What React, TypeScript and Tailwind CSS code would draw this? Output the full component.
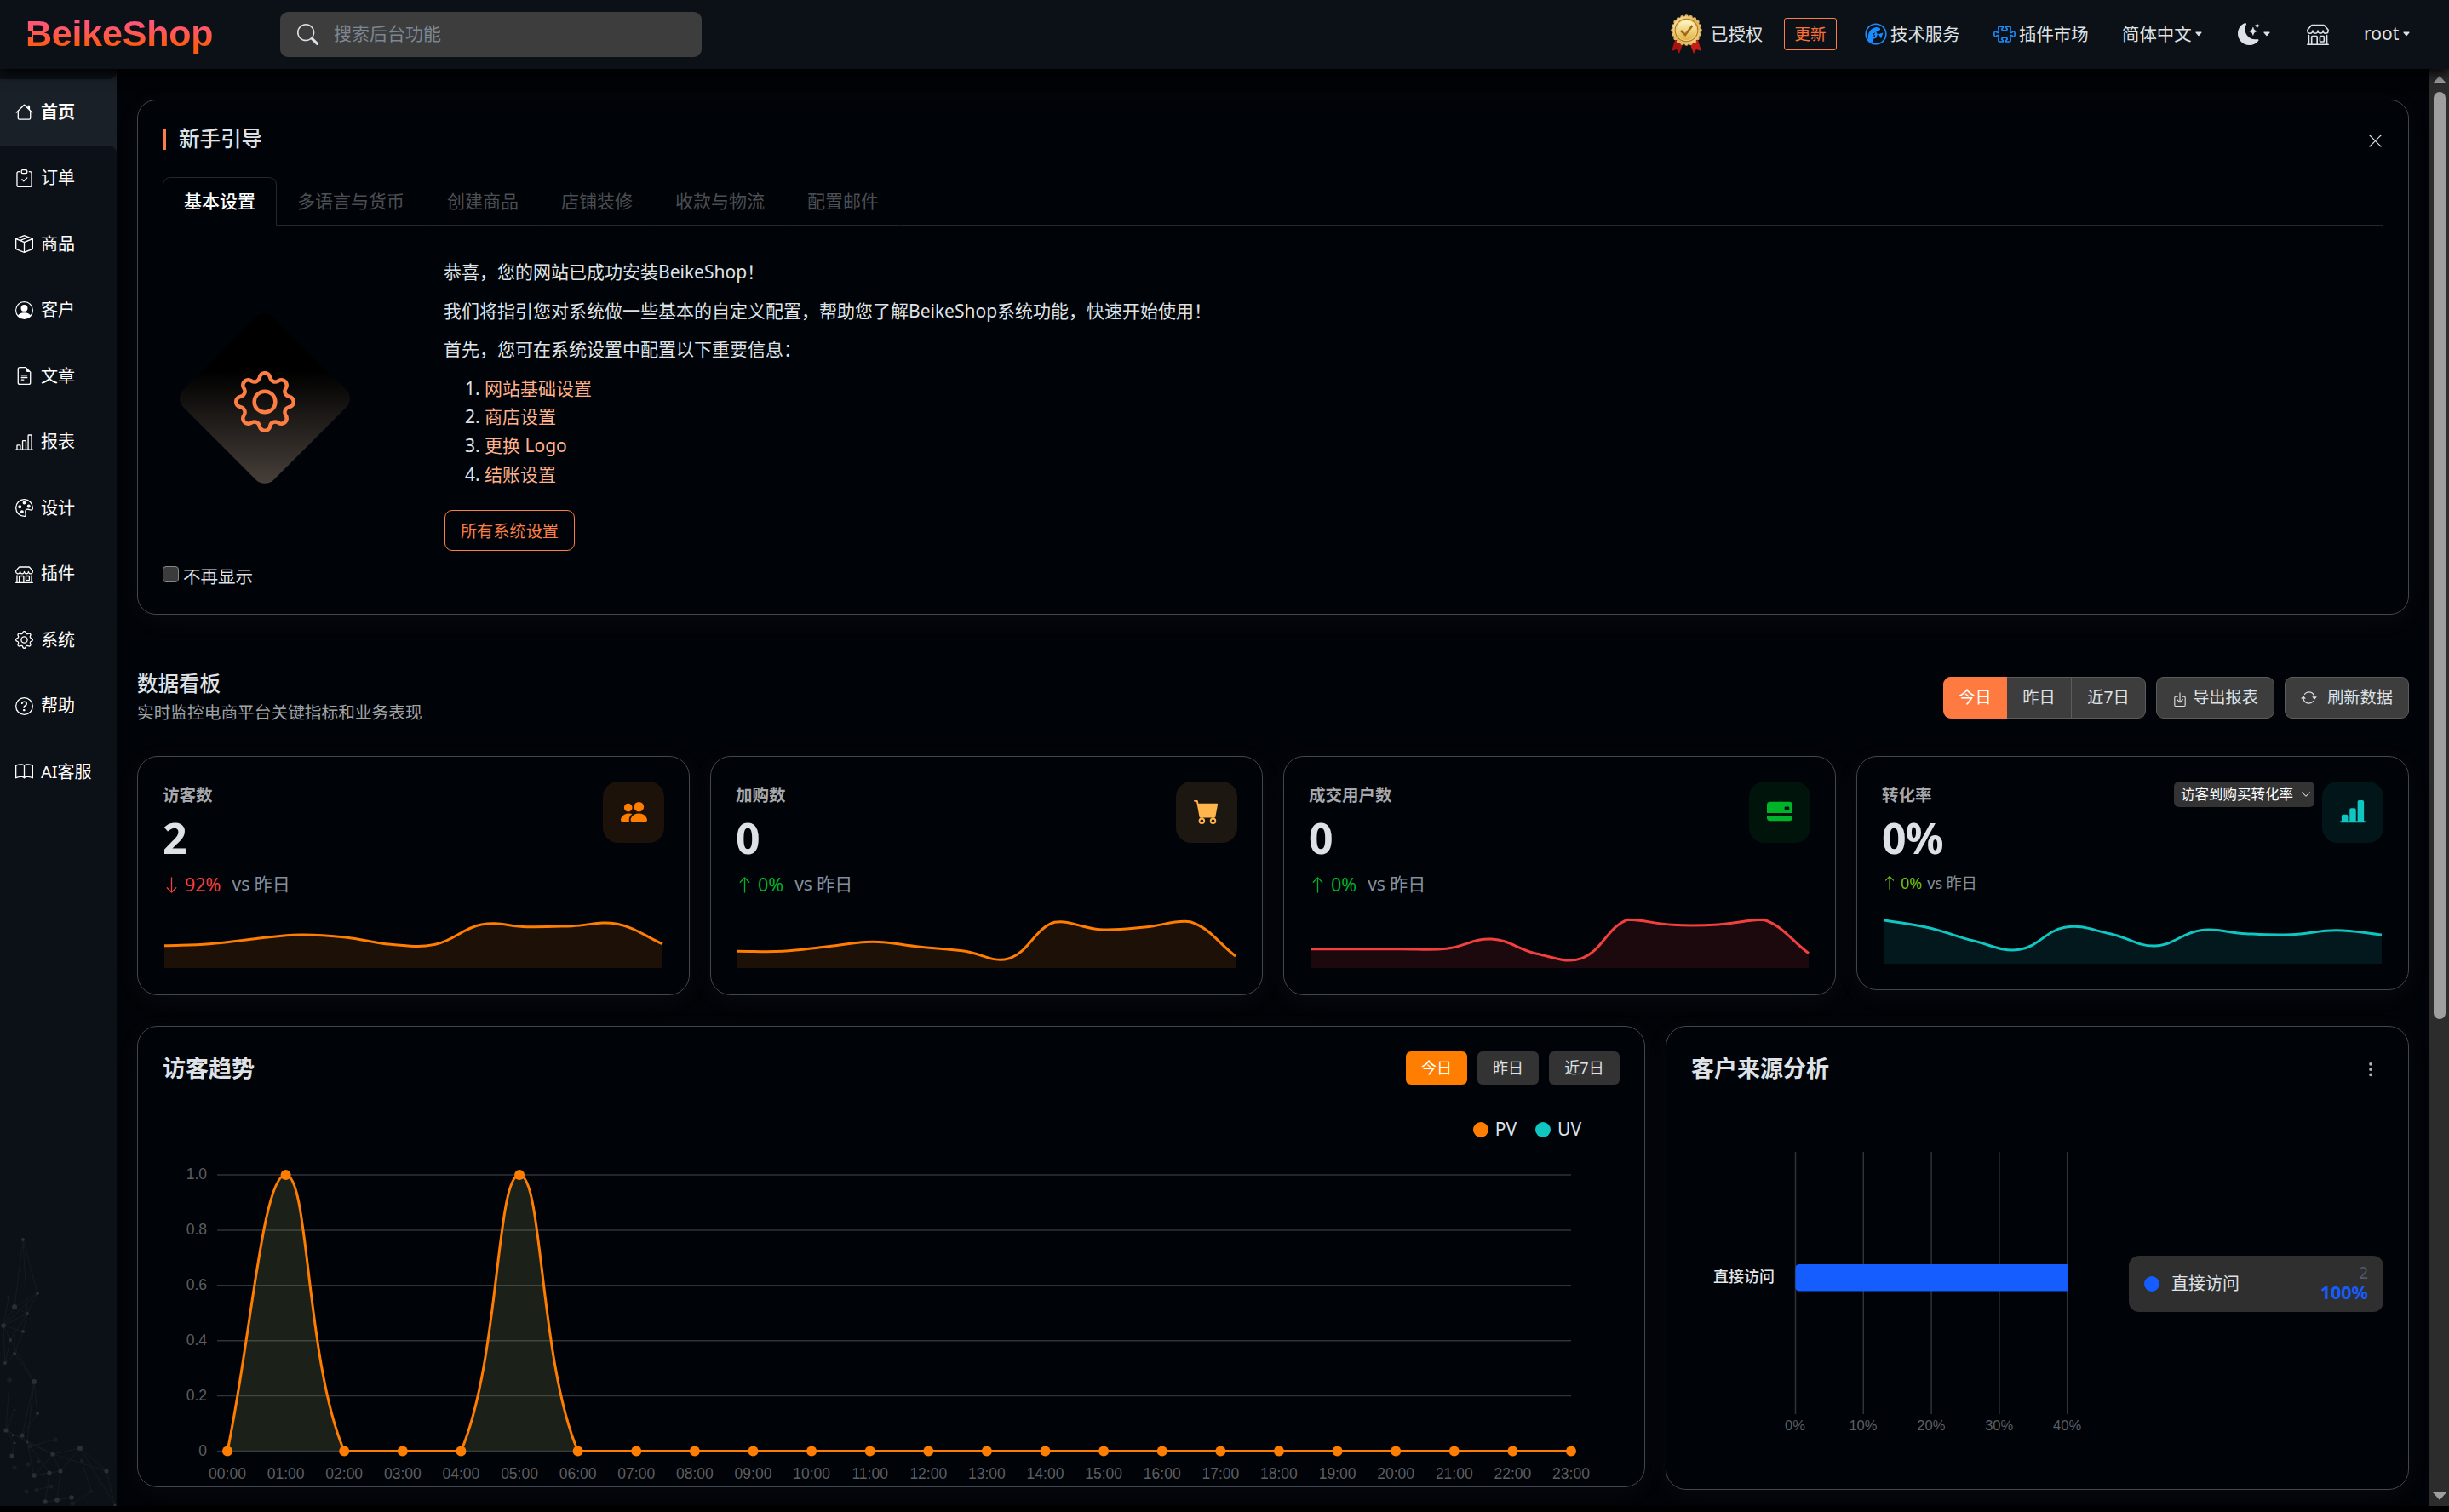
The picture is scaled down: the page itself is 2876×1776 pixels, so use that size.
import { type ReactNode } from 'react';
import clsx from 'clsx';
import {
    BsArrowDown,
    BsArrowRepeat,
    BsArrowUp,
    BsBarChartLine,
    BsBarChartLineFill,
    BsBook,
    BsBoxArrowInDown,
    BsBoxSeam,
    BsCaretDownFill,
    BsCartFill,
    BsChevronDown,
    BsClipboardCheck,
    BsCreditCard2BackFill,
    BsFileEarmarkText,
    BsGear,
    BsHouse,
    BsMoonStarsFill,
    BsPalette,
    BsPeopleFill,
    BsPersonCircle,
    BsPuzzle,
    BsQuestionCircle,
    BsSearch,
    BsShop,
    BsThreeDotsVertical,
    BsXLg,
} from 'react-icons/bs';

type Point = [number, number];

/** Bezier spline through the points, control points capped to the chart area. */
function smoothPath(pts: Point[], top: number, bottom: number, tension = 0.4) {
    const cap = (y: number) => Math.max(top, Math.min(bottom, y));
    let d = `M${pts[0][0]} ${pts[0][1]}`;

    const controls = pts.map((cur, i) => {
        const prev = pts[i - 1] ?? cur;
        const next = pts[i + 1] ?? cur;
        const d01 = Math.hypot(cur[0] - prev[0], cur[1] - prev[1]);
        const d12 = Math.hypot(next[0] - cur[0], next[1] - cur[1]);
        const fa = (tension * d01) / (d01 + d12);
        const fb = (tension * d12) / (d01 + d12);
        const vx = next[0] - prev[0];
        const vy = next[1] - prev[1];
        return {
            before: [cur[0] - fa * vx, cap(cur[1] - fa * vy)],
            after: [cur[0] + fb * vx, cap(cur[1] + fb * vy)],
        };
    });

    for (let i = 1; i < pts.length; i++) {
        d += ` C${controls[i - 1].after.join(' ')} ${controls[i].before.join(' ')} ${pts[i].join(' ')}`;
    }
    return d;
}

const menu = [
    { label: '首页', icon: BsHouse },
    { label: '订单', icon: BsClipboardCheck },
    { label: '商品', icon: BsBoxSeam },
    { label: '客户', icon: BsPersonCircle },
    { label: '文章', icon: BsFileEarmarkText },
    { label: '报表', icon: BsBarChartLine },
    { label: '设计', icon: BsPalette },
    { label: '插件', icon: BsShop },
    { label: '系统', icon: BsGear },
    { label: '帮助', icon: BsQuestionCircle },
    { label: 'AI客服', icon: BsBook },
];

const guideTabs = ['基本设置', '多语言与货币', '创建商品', '店铺装修', '收款与物流', '配置邮件'];
const guideLinks = ['网站基础设置', '商店设置', '更换 Logo', '结账设置'];

function Medal() {
    const scallops = Array.from({ length: 20 }, (_, i) => (i * Math.PI) / 10);
    return (
        <svg viewBox="0 0 37 46" className="ml-px h-[46px] w-[37px]">
            <defs>
                <linearGradient id="gold" x1="0" y1="0" x2="1" y2="1">
                    <stop offset="0" stopColor="#fff0b0" />
                    <stop offset="0.5" stopColor="#e3b04b" />
                    <stop offset="1" stopColor="#f7dd8c" />
                </linearGradient>
                <linearGradient id="face" x1="0" y1="0" x2="0" y2="1">
                    <stop offset="0" stopColor="#fff6c4" />
                    <stop offset="1" stopColor="#e3b247" />
                </linearGradient>
            </defs>
            <path d="M5 30 L1 43 L7 41 L10 46 L15 33 Z" fill="#a51410" />
            <path d="M32 30 L36 43 L30 41 L27 46 L22 33 Z" fill="#c21d17" />
            {scallops.map(a => (
                <circle key={a} cx={18.5 + 16 * Math.cos(a)} cy={18.5 + 16 * Math.sin(a)} r="2.3" fill="#e0b865" />
            ))}
            <circle cx="18.5" cy="18.5" r="16.2" fill="url(#gold)" />
            <circle cx="18.5" cy="18.5" r="13.8" fill="#a8702a" />
            <circle cx="18.5" cy="18.5" r="12.8" fill="#f0cf7a" />
            <circle cx="18.5" cy="18.5" r="11.5" fill="url(#face)" />
            <path d="M12 19 L17 24 L25.500 13" fill="none" stroke="#a06a12" strokeWidth="2.6" />
        </svg>
    );
}

function ServiceIcon() {
    return (
        <svg viewBox="0 0 26 26" className="h-[26px] w-[26px]">
            <circle cx="13" cy="13" r="11.800" fill="none" stroke="#1a8cff" strokeWidth="1.600" />
            <path
                d="M4 20 C2.500 12 7 5.500 13.500 5 C17 5 18.500 6 18 8 L15.500 10 L13 10.500 L15 13 L13.500 17.500 L9.500 19 L9.500 23 C7 23 5 22 4 20 Z"
                fill="#1a8cff"
            />
            <path d="M16 13 L21.500 11.500 L19 18.500 Z" fill="#1a8cff" />
            <path d="M12 12 L9.500 13 L12 15.200 L9.500 16.500" fill="none" stroke="#0c1118" strokeWidth="1" />
        </svg>
    );
}

function Header() {
    return (
        <header className="relative z-10 flex h-[81px] items-center bg-[#0c1118] pb-px text-[20.4px] text-[#dee2e6] shadow-[0_5px_14px_#000]">
            <div className="relative -mt-[3px] ml-[30px] w-[299px]">
                <span className="bg-gradient-to-b from-[#ff5577] from-25% to-[#ff5a14] to-75% bg-clip-text font-['Liberation_Sans'] text-[43px] leading-[50px] font-bold tracking-[-0.2px] text-transparent">
                    BeikeShop
                </span>
                <span className="absolute top-[23px] left-[2px] h-[6px] w-[6px] bg-[#0c1118]" />
            </div>
            <div className="flex h-[53px] w-[495px] items-center rounded-[9px] bg-[#3d3d3d] pl-5">
                <BsSearch className="h-[25px] w-[25px]" />
                <span className="ml-[18px] text-[21px] text-[#7c8794]">搜索后台功能</span>
            </div>

            <div className="mr-[45px] ml-auto flex items-center whitespace-nowrap">
                <div className="flex w-[134px] items-center gap-[10px]">
                    <Medal />
                    <span>已授权</span>
                </div>
                <button className="h-[38px] w-[62px] rounded-[3px] border-[1.500px] border-[#fd7e44] text-[18.500px] text-[#fd7034]">
                    更新
                </button>
                <div className="ml-[33px] flex w-[151px] items-center gap-[4px]">
                    <ServiceIcon />
                    <span>技术服务</span>
                </div>
                <div className="flex w-[151px] items-center gap-[4px]">
                    <BsPuzzle className="h-[26px] w-[26px] text-[#1a8cff]" />
                    <span>插件市场</span>
                </div>
                <div className="flex w-[136px] items-center gap-[3px]">
                    <span>简体中文</span>
                    <BsCaretDownFill className="h-[10px] w-[10px]" />
                </div>
                <div className="flex w-[81px] items-center gap-[3px]">
                    <BsMoonStarsFill className="h-[26px] w-[26px]" />
                    <BsCaretDownFill className="h-[10px] w-[10px]" />
                </div>
                <div className="w-[67px]">
                    <BsShop className="h-[26px] w-[26px]" />
                </div>
                <div className="flex w-[55px] items-center gap-[4px]">
                    <span className="text-[21px]">root</span>
                    <BsCaretDownFill className="h-[10px] w-[10px] shrink-0" />
                </div>
            </div>
        </header>
    );
}

const nodes: [number, number, number, boolean][] = [
    [27, 12, 2, true], [44, 75, 2, true], [17, 91, 3, true], [32, 99, 2, true], [4, 113, 2.8, true],
    [27, 120, 2, true], [12, 130, 2, true], [17, 146, 2, true], [6, 157, 2, true], [40, 179, 3, true],
    [44, 216, 2, true], [7, 236, 2.6, true], [26, 242, 2.6, true], [32, 250, 1.6, true], [17, 251, 1.6, true],
    [15, 242, 1.4, true], [14, 266, 2.6, true], [62, 264, 2.6, true], [94, 257, 3, true], [125, 284, 2.6, true],
    [71, 284, 2.6, true], [58, 286, 2.6, true], [40, 289, 2.8, true], [84, 315, 2.8, true], [67, 318, 2.8, true],
    [53, 320, 2.8, true], [135, 324, 1.5, true], [10, 80, 2, false], [11, 177, 2.8, false], [17, 212, 1.6, false],
    [65, 247, 2.6, false], [96, 272, 2.4, false], [35, 255, 2.6, false], [45, 273, 2.4, false], [33, 276, 2.8, false],
    [17, 280, 2.6, false], [60, 302, 2.6, false], [43, 306, 2.6, false], [31, 308, 2.6, false], [107, 308, 1.8, false],
    [85, 322, 2.6, false],
];

const links: [number, number][] = [
    [0, 1], [0, 2], [0, 3], [1, 2], [1, 4], [1, 3], [2, 3], [2, 4], [3, 4], [3, 5], [4, 5], [3, 6], [5, 7], [4, 6],
    [6, 8], [4, 8], [7, 8], [2, 7], [6, 9], [7, 9], [9, 10], [9, 12], [9, 13], [10, 12], [11, 14], [12, 13], [14, 16],
    [13, 17], [17, 18], [18, 20], [18, 19], [17, 19], [13, 22], [20, 22], [21, 22], [17, 22], [13, 21], [19, 26],
    [18, 26], [20, 24], [21, 25], [23, 24], [24, 25], [20, 17], [11, 13], [11, 17], [28, 11], [29, 11], [30, 32],
    [31, 39], [36, 37], [27, 4], [39, 40],
];

function MenuItem({ item, active }: { item: (typeof menu)[number]; active?: boolean }) {
    const Icon = item.icon;
    return (
        <a className={clsx('flex h-[77.5px] items-center gap-[9px] pl-[18px] leading-none', active && 'font-bold')}>
            <Icon className="h-[21px] w-[21px]" />
            {item.label}
        </a>
    );
}

function Sidebar() {
    const [home, ...rest] = menu;
    return (
        <aside className="flex w-[137px] shrink-0 flex-col bg-[#1a2027] text-[20px] text-white">
            <div className="h-[12px] shrink-0 rounded-br-[9px] bg-[#0c1118]" />
            <MenuItem item={home} active />
            <div className="flex flex-1 flex-col rounded-tr-[9px] bg-[#0c1118]">
                {rest.map(item => (
                    <MenuItem key={item.label} item={item} />
                ))}
                <svg viewBox="0 0 137 356" className="mt-auto h-[356px] w-[137px]">
                    {links.map(([a, b]) => (
                        <line
                            key={`${a}-${b}`}
                            x1={nodes[a][0]}
                            y1={nodes[a][1] + 31}
                            x2={nodes[b][0]}
                            y2={nodes[b][1] + 31}
                            stroke="#161b1f"
                        />
                    ))}
                    {nodes.map(([x, y, r, bright]) => (
                        <circle key={`${x}-${y}`} cx={x} cy={y + 31} r={r} fill={bright ? '#2b2f34' : '#191d22'} />
                    ))}
                </svg>
            </div>
        </aside>
    );
}

function Card({ className, children }: { className?: string; children: ReactNode }) {
    return (
        <section className={clsx('border border-[#42464d] bg-[#000308] shadow-[0_6px_30px_rgba(150,180,220,0.05)]', className)}>
            {children}
        </section>
    );
}

function Guide() {
    return (
        <Card className="h-[605px] rounded-[22px] px-[29px]">
            <div className="flex h-[90px] items-center">
                <span className="h-[25px] w-1 bg-[#fd7e44]" />
                <h2 className="ml-[15px] text-[24.500px] font-medium">新手引导</h2>
                <BsXLg className="mt-[4px] ml-auto h-[19px] w-[19px]" />
            </div>

            <div className="flex h-[57px] text-[21px] text-[#4b4e52]">
                {guideTabs.map((tab, i) => (
                    <span
                        key={tab}
                        className={clsx(
                            'flex items-center border px-6',
                            i === 0
                                ? 'rounded-t-[9px] border-[#24282d] border-b-transparent font-medium text-white'
                                : '-ml-px border-transparent border-b-[#24282d] pr-[25px]',
                        )}
                    >
                        {tab}
                    </span>
                ))}
                <span className="flex-1 border-b border-[#24282d]" />
            </div>

            <div className="mt-[39px] flex h-[343px]">
                <div className="flex w-[271px] justify-center border-r border-[#303338] pr-[30px]">
                    <div className="relative mt-[89px] h-[150px] w-[150px]">
                        <div className="h-full w-full rotate-45 rounded-[15px] bg-[linear-gradient(135deg,#000_35%,#4a423c)]" />
                        <BsGear className="absolute top-[43px] left-[39px] h-[72px] w-[72px] text-[#fd7e44]" />
                    </div>
                </div>
                <div className="-mt-px pl-[59px] text-[21px] leading-[33.600px]">
                    <p className="mb-3">恭喜，您的网站已成功安装BeikeShop！</p>
                    <p className="mb-3">我们将指引您对系统做一些基本的自定义配置，帮助您了解BeikeShop系统功能，快速开始使用！</p>
                    <p className="mb-3">首先，您可在系统设置中配置以下重要信息：</p>
                    <ol className="list-decimal pl-12">
                        {guideLinks.map(link => (
                            <li key={link}>
                                <a className="text-[#feb08b]">{link}</a>
                            </li>
                        ))}
                    </ol>
                    <button className="mt-[25px] ml-px h-[48px] w-[153px] rounded-[9px] border border-[#fd7e44] text-[19.200px] leading-none text-[#fd7e44]">
                        所有系统设置
                    </button>
                </div>
            </div>

            <label className="mt-[13px] flex h-[34px] items-center">
                <span className="mb-[6px] h-[19px] w-[19px] rounded-[4px] border-[1.500px] border-[#858585] bg-[#3b3b3b]" />
                <span className="ml-[5px] text-[20.500px] leading-[34px]">不再显示</span>
            </label>
        </Card>
    );
}

function DashboardHeading() {
    const button = 'flex h-[49px] items-center justify-center border border-[#5c5c5c] bg-[#3d3d3d] text-[19.200px]';
    return (
        <div className="mt-[64px] flex h-[67px] items-center justify-between">
            <div>
                <h2 className="text-[24.500px] leading-[35px] font-medium">数据看板</h2>
                <p className="text-[19.700px] leading-[34px] text-[#a0a3a6]">实时监控电商平台关键指标和业务表现</p>
            </div>
            <div className="flex gap-3">
                <div className="flex">
                    <button className="h-[49px] w-[75px] rounded-l-[9px] bg-[#ff7a40] text-[19.200px] text-white">今日</button>
                    <button className={clsx(button, 'w-[76px] border-l-0')}>昨日</button>
                    <button className={clsx(button, 'w-[87px] rounded-r-[9px] border-l-0')}>近7日</button>
                </div>
                <button className={clsx(button, 'w-[139px] gap-[6px] rounded-[9px]')}>
                    <BsBoxArrowInDown className="mt-[3px] h-[18px] w-[18px]" />
                    导出报表
                </button>
                <button className={clsx(button, 'w-[146px] gap-[12px] rounded-[9px]')}>
                    <BsArrowRepeat className="h-[19px] w-[19px]" />
                    刷新数据
                </button>
            </div>
        </div>
    );
}

function Sparkline({ values, color }: { values: number[]; color: string }) {
    const step = 585 / (values.length - 1);
    const line = smoothPath(values.map((v, i): Point => [i * step, v]), 3.3, 60);
    return (
        <svg viewBox="0 0 585 60" className="ml-[2px] h-[60px] w-[585px] overflow-visible">
            <path d={`${line} L585 60 L0 60 Z`} fill={color} fillOpacity="0.11" />
            <path d={line} fill="none" stroke={color} strokeWidth="3" />
        </svg>
    );
}

interface StatCardProps {
    label: string;
    value: string;
    change: string;
    trend: 'up' | 'down';
    icon: ReactNode;
    iconClass: string;
    values: number[];
    color: string;
    select?: string;
}

function StatCard({ label, value, change, trend, icon, iconClass, values, color, select }: StatCardProps) {
    const Arrow = trend === 'up' ? BsArrowUp : BsArrowDown;
    return (
        <Card className={clsx('rounded-[24px] px-[29px] pt-[29px]', select ? 'h-[275px]' : 'h-[281px]')}>
            <div className="flex h-[90px]">
                <div className="flex-1">
                    <div className="text-[19.500px] leading-[32px] font-bold text-[#a6a8ab]">{label}</div>
                    <div className="mt-[6px] text-[50px] leading-[56px] font-bold tracking-[-1px]">{value}</div>
                </div>
                {select && (
                    <div className="mr-[9px] flex h-[30px] w-[165px] items-center justify-between rounded-[6px] bg-[#333] pr-[4px] pl-[8px] text-[16.500px] text-white">
                        {select}
                        <BsChevronDown className="h-[12px] w-[12px]" />
                    </div>
                )}
                <div className={clsx('flex h-[72px] w-[72px] items-center justify-center rounded-[18px] pb-[2px]', iconClass)}>
                    {icon}
                </div>
            </div>
            <div
                className={clsx(
                    'flex h-[34px] items-center',
                    select ? 'mt-[12px] mb-[18px] text-[18px]' : 'mt-[14px] mb-[21px] text-[21px]',
                    select ? 'text-[#72c40f]' : trend === 'up' ? 'text-[#00b42a]' : 'text-[#f53f3f]',
                )}
            >
                <Arrow className={select ? 'h-[18px] w-[18px]' : 'h-[21px] w-[21px]'} />
                <span className={select ? 'ml-[4px]' : 'ml-[5px] text-[21.500px]'}>{change}</span>
                <span className={clsx('text-[#86909c]', select ? 'ml-[6px]' : 'ml-[13px]')}>vs 昨日</span>
            </div>
            <Sparkline values={values} color={color} />
        </Card>
    );
}

const hours = Array.from({ length: 24 }, (_, i) => `${String(i).padStart(2, '0')}:00`);
const visits = hours.map((_, i) => (i === 1 || i === 5 ? 1 : 0));

function TrendChart() {
    const left = 105;
    const right = 1683;
    const bottom = 355.5;
    const height = 324.5;
    const pts = visits.map((v, i): Point => [left + (i * (right - left)) / 23, bottom - v * height]);
    const line = smoothPath(pts, bottom - height, bottom);
    const area = `${line} L${right} ${bottom} L${left} ${bottom} Z`;
    const ticks = ['0', '0.2', '0.4', '0.6', '0.8', '1.0'];

    return (
        <svg viewBox="0 0 1768 396" className="h-[396px] w-[1768px] font-['Liberation_Sans'] text-[17.500px]">
            {ticks.map((t, i) => {
                const y = bottom - (i * height) / 5;
                return (
                    <g key={t}>
                        <line x1={93} x2={right} y1={y} y2={y} stroke="#303338" strokeWidth="1.500" />
                        <text x={81} y={y + 5} textAnchor="end" fill="#5c5e61">{t}</text>
                    </g>
                );
            })}
            <path d={area} fill="#0fc6c2" fillOpacity="0.1" />
            <path d={area} fill="#ff7d00" fillOpacity="0.1" />
            <path d={line} fill="none" stroke="#ff7d00" strokeWidth="3" />
            {pts.map(([x, y], i) => (
                <g key={hours[i]}>
                    <circle cx={x} cy={y} r="6" fill="#ff7d00" />
                    <text x={x} y={388} textAnchor="middle" fill="#5c5e61">{hours[i]}</text>
                </g>
            ))}
        </svg>
    );
}

function VisitorTrend() {
    return (
        <Card className="h-[542px] w-[1771px] rounded-[24px]">
            <div className="flex h-[99px] items-center pr-[29px] pl-[29px]">
                <h3 className="text-[27px] font-bold">访客趋势</h3>
                <div className="mb-[3px] ml-auto flex gap-3 text-[18px]">
                    <button className="h-[39px] w-[72px] rounded-[6px] bg-[#ff7d00] text-white">今日</button>
                    <button className="h-[39px] w-[72px] rounded-[6px] bg-[#333]">昨日</button>
                    <button className="h-[39px] w-[83px] rounded-[6px] bg-[#333]">近7日</button>
                </div>
            </div>
            <div className="flex h-[44px] items-center justify-end pr-[74px] text-[21px]">
                <span className="h-[18px] w-[18px] rounded-full bg-[#ff7d00]" />
                <span className="ml-[8px]">PV</span>
                <span className="ml-[22px] h-[18px] w-[18px] rounded-full bg-[#0fc6c2]" />
                <span className="ml-[8px]">UV</span>
            </div>
            <TrendChart />
        </Card>
    );
}

function CustomerSource() {
    const percents = ['0%', '10%', '20%', '30%', '40%'];
    return (
        <Card className="h-[545px] w-[873px] rounded-[24px] px-[29px]">
            <div className="flex h-[99px] items-center justify-between">
                <h3 className="text-[27px] font-bold">客户来源分析</h3>
                <BsThreeDotsVertical className="mr-[5px] h-[20px] w-[20px] text-[#b0b3b8]" />
            </div>
            <div className="flex">
                <svg viewBox="0 0 484 400" className="h-[400px] w-[484px]">
                    {percents.map((p, i) => (
                        <g key={p}>
                            <line x1={122.5 + i * 79.800} x2={122.5 + i * 79.800} y1={48} y2={356} stroke="#303338" strokeWidth="1.500" />
                            <text
                                x={122 + i * 79.9}
                                y={375}
                                textAnchor="middle"
                                fill="#5c5e61"
                                className="font-['Liberation_Sans'] text-[16.500px]"
                            >
                                {p}
                            </text>
                        </g>
                    ))}
                    <path d="M127 180 H442 V211.500 H127 Q122.500 211.500 122.500 206.500 V185 Q122.500 180 127 180 Z" fill="#165dff" />
                    <text x={98} y={201} textAnchor="end" fill="#e5e8eb" className="text-[18px] font-medium">直接访问</text>
                </svg>
                <div className="mt-[170px] ml-[30px] flex h-[66px] w-[299px] items-center rounded-[12px] bg-[#2f2f2f] px-[18px]">
                    <span className="h-[18px] w-[18px] rounded-full bg-[#165dff]" />
                    <span className="ml-[14px] text-[20px]">直接访问</span>
                    <div className="ml-auto text-right">
                        <div className="text-[19px] leading-[20px] text-[#4e5969]">2</div>
                        <div className="text-[21.500px] leading-[26px] font-bold text-[#165dff]">100%</div>
                    </div>
                </div>
            </div>
        </Card>
    );
}

function Scrollbar() {
    return (
        <div className="flex w-[23px] shrink-0 flex-col items-center bg-[#2c2c2c] text-[#9f9f9f]">
            <svg viewBox="0 0 16 9" className="mt-[8px] h-[9px] w-[16px]">
                <path d="M8 0 L16 9 H0 Z" fill="currentColor" />
            </svg>
            <div className="mt-[10px] h-[1089px] w-[14px] rounded-full bg-[#9f9f9f]" />
            <svg viewBox="0 0 16 9" className="mt-auto mb-[7px] h-[9px] w-[16px]">
                <path d="M8 9 L16 0 H0 Z" fill="currentColor" />
            </svg>
        </div>
    );
}

export default function App() {
    return (
        <div className="h-[1776px] w-[2876px] overflow-hidden bg-black font-['Noto_Sans','Noto_Sans_CJK_SC',sans-serif] text-[#dee2e6]">
            <Header />
            <div className="flex h-[1688px]">
                <Sidebar />
                <main className="flex-1 overflow-hidden bg-[#000307] px-6 pt-[36px]">
                    <Guide />
                    <DashboardHeading />

                    {/* Key metrics */}
                    <div className="mt-[35px] grid h-[281px] grid-cols-4 items-start gap-6">
                        <StatCard
                            label="访客数"
                            value="2"
                            change="92%"
                            trend="down"
                            icon={<BsPeopleFill className="h-[31px] w-[31px]" />}
                            iconClass="bg-[#1c120a] text-[#ff7d00]"
                            values={[33.7, 31.7, 25.7, 21, 24, 32.3, 32, 9, 11.7, 10.7, 8.3, 31.7]}
                            color="#ff7d00"
                        />
                        <StatCard
                            label="加购数"
                            value="0"
                            change="0%"
                            trend="up"
                            icon={<BsCartFill className="h-[30px] w-[30px]" />}
                            iconClass="bg-[#1c1710] text-[#ffb54d]"
                            values={[40.3, 40.3, 34.7, 29.3, 35, 40, 48.7, 6.3, 14.7, 12, 5.7, 46]}
                            color="#ff7d00"
                        />
                        <StatCard
                            label="成交用户数"
                            value="0"
                            change="0%"
                            trend="up"
                            icon={<BsCreditCard2BackFill className="h-[30px] w-[30px]" />}
                            iconClass="bg-[#00140b] text-[#00b42a]"
                            values={[37.7, 37.7, 37.7, 37.3, 26, 43.3, 48.3, 3.3, 9.3, 9, 3.3, 42.7]}
                            color="#f53f3f"
                        />
                        <StatCard
                            label="转化率"
                            value="0%"
                            change="0%"
                            trend="up"
                            icon={<BsBarChartLineFill className="h-[30px] w-[30px]" />}
                            iconClass="bg-[#02161a] text-[#0fc6c2]"
                            values={[8.7, 17.7, 33.3, 43.3, 17.3, 24.7, 39, 20.7, 24.7, 25.7, 20.7, 26]}
                            color="#0fc6c2"
                            select="访客到购买转化率"
                        />
                    </div>

                    {/* Charts */}
                    <div className="mt-[36px] flex items-start justify-between">
                        <VisitorTrend />
                        <CustomerSource />
                    </div>
                </main>
                <Scrollbar />
            </div>
        </div>
    );
}
